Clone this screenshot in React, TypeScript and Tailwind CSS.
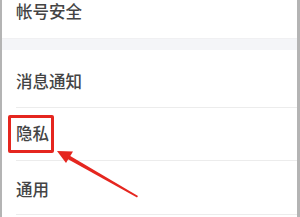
import React from "react";

const font = { fontFamily: '"Noto Sans CJK SC", "Noto Sans", sans-serif' };

export default function App() {
  return (
    <div
      className="relative w-[300px] h-[217px] overflow-hidden bg-white border-l-[2px] border-r-[3px] border-[#b4b4b4] text-[#444444]"
      style={font}
    >
      <div className="h-[38px] pt-[3px] pl-[14px] text-[16.5px] leading-none font-medium">帐号安全</div>
      <div className="h-[12px] bg-[#f4f5f8] border-t border-[#f0f0f2]" />
      <div className="h-[57px] pt-[23px] pl-[14px] text-[16.5px] leading-none font-medium">消息通知</div>
      <div className="ml-[14px] h-px bg-[#ececec]" />
      <div className="h-[52px] pt-[17px] pl-[14px] text-[16.5px] leading-none font-medium">隐私</div>
      <div className="ml-[14px] h-px bg-[#ececec]" />
      <div className="h-[53px] pt-[20px] pl-[14px] text-[16.5px] leading-none font-medium">通用</div>
      <div className="ml-[14px] h-px bg-[#ececec]" />

      <div className="absolute left-[6px] top-[115px] w-[46px] h-[38px] border-[3px] border-[#e5261f] rounded-[2px]" />

      <svg className="absolute left-0 top-0" width="298" height="217" viewBox="0 0 298 217">
        <polygon points="135,197.5 136,196 64,153.5 62,157" fill="#e5261f" />
        <polygon points="55,151 71,151.5 64,163" fill="#e5261f" />
      </svg>
    </div>
  );
}
